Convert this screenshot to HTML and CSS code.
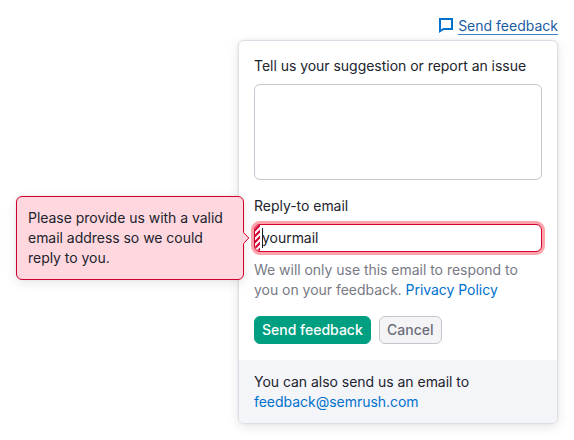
FILE: index.html
```html
<!DOCTYPE html>
<html lang="en">
<head>
<meta charset="utf-8">
<title>Send feedback</title>
<link rel="stylesheet" href="styles.css">
</head>
<body>
<main class="page">
  <a class="trigger">
    <svg class="trigger-icon" width="16" height="16" viewBox="0 0 16 16" fill="none" stroke="currentColor" stroke-width="2"><path d="M2 2h12v10H5.6L2 14.2z"/></svg>
    <span class="trigger-text">Send feedback</span>
  </a>
  <form class="card">
    <div class="card-body">
      <label class="label" for="message">Tell us your suggestion or report an issue</label>
      <textarea class="textarea" id="message"></textarea>
      <label class="label" for="email">Reply-to email</label>
      <div class="field">
        <div class="input-box">
          <svg class="stripes" width="5" height="26" viewBox="0 0 5 26"><path d="M-1 6L6-1M-1 12L6 5M-1 18L6 11M-1 24L6 17M-1 30L6 23" stroke="#d1002f" stroke-width="2.2"/></svg>
          <span class="caret"></span>
          <input class="input" id="email" value="yourmail">
        </div>
        <div class="tooltip">Please provide us with a valid email address so we could reply&nbsp;to you.
          <svg class="arrow" width="7" height="14" viewBox="0 0 7 14"><path d="M0 1L1 1L6 7L1 13H0z" fill="#ffd7df"/><path d="M.5 0V1.5L5.8 7L.5 12.5V14" fill="none" stroke="#d1002f"/></svg>
        </div>
      </div>
      <p class="hint">We will only use this email to respond to you on your feedback. <a class="link">Privacy Policy</a></p>
      <div class="actions">
        <button class="button primary" type="button">Send feedback</button>
        <button class="button secondary" type="button">Cancel</button>
      </div>
    </div>
    <footer class="card-footer">You can also send us an email to <a class="link">feedback@semrush.com</a></footer>
  </form>
</main>
</body>
</html>
```
FILE: styles.css
```css
* {
  box-sizing: border-box;
}

body {
  margin: 0;
  background: #fff;
  color: #22242d;
  font: 14px/20px Inter, "Liberation Sans", sans-serif;
  letter-spacing: -0.03px;
}

.page {
  display: flex;
  flex-direction: column;
  align-items: flex-end;
  min-height: 440px;
  padding: 16px 16px 16px 0;
}

.trigger {
  display: flex;
  gap: 4px;
  height: 24px;
  color: #0071cd;
}

.trigger-icon {
  margin-top: 1px;
}

.trigger-text {
  height: 19px;
  border-bottom: 1px solid #3f84c4;
  color: #1c5ca3;
  letter-spacing: 0;
}

.card {
  width: 320px;
  height: 384px;
  border: 1px solid #dcdee5;
  border-radius: 6px;
  background: #fff;
  box-shadow: 0 3px 12px rgba(25, 27, 35, 0.1), 0 0 3px rgba(25, 27, 35, 0.06);
}

.card-body {
  height: 319px;
  padding: 15px 15px 0;
}

.label {
  display: block;
}

.textarea {
  display: block;
  width: 288px;
  height: 96px;
  margin: 8px 0 16px;
  border: 1px solid #c4c7cf;
  border-radius: 6px;
  background: #fff;
  resize: none;
}

.field {
  position: relative;
  margin-top: 8px;
}

.input-box {
  display: flex;
  align-items: center;
  height: 28px;
  overflow: hidden;
  border: 1px solid #d1002f;
  border-radius: 6px;
  background: #fff;
  box-shadow: 0 0 0 3px #ffa3aa;
}

.stripes {
  flex: none;
}

.caret {
  flex: none;
  width: 1px;
  height: 20px;
  margin-left: 2px;
  background: #191b23;
}

.input {
  flex: 1;
  min-width: 0;
  height: 20px;
  margin-left: -1px;
  padding: 0;
  border: 0;
  outline: 0;
  background: none;
  color: inherit;
  font: inherit;
  letter-spacing: inherit;
}

.tooltip {
  position: absolute;
  top: -28px;
  right: 298px;
  width: 228px;
  height: 84px;
  padding: 11px;
  border: 1px solid #d1002f;
  border-radius: 6px;
  background: #ffd7df;
  box-shadow: 0 3px 12px rgba(25, 27, 35, 0.1), 0 0 3px rgba(25, 27, 35, 0.06);
}

.arrow {
  position: absolute;
  top: 34px;
  right: -7px;
}

.hint {
  margin: 8px 0 16px;
  color: #787a85;
}

.link {
  color: #0071cd;
}

.actions {
  display: flex;
  gap: 8px;
}

.button {
  height: 28px;
  padding: 0 7px;
  border: 1px solid transparent;
  border-radius: 6px;
  font: 500 14px/20px Inter, "Liberation Sans", sans-serif;
}

.primary {
  border-color: #009f81;
  background: #009f81;
  color: #fff;
}

.secondary {
  width: 63px;
  border-color: #c4c7cf;
  background: #f4f4f6;
  color: #6c6e79;
}

.card-footer {
  height: 63px;
  padding: 12px 60px 0 15px;
  border-radius: 0 0 5px 5px;
  background: #f4f5f9;
}
```
